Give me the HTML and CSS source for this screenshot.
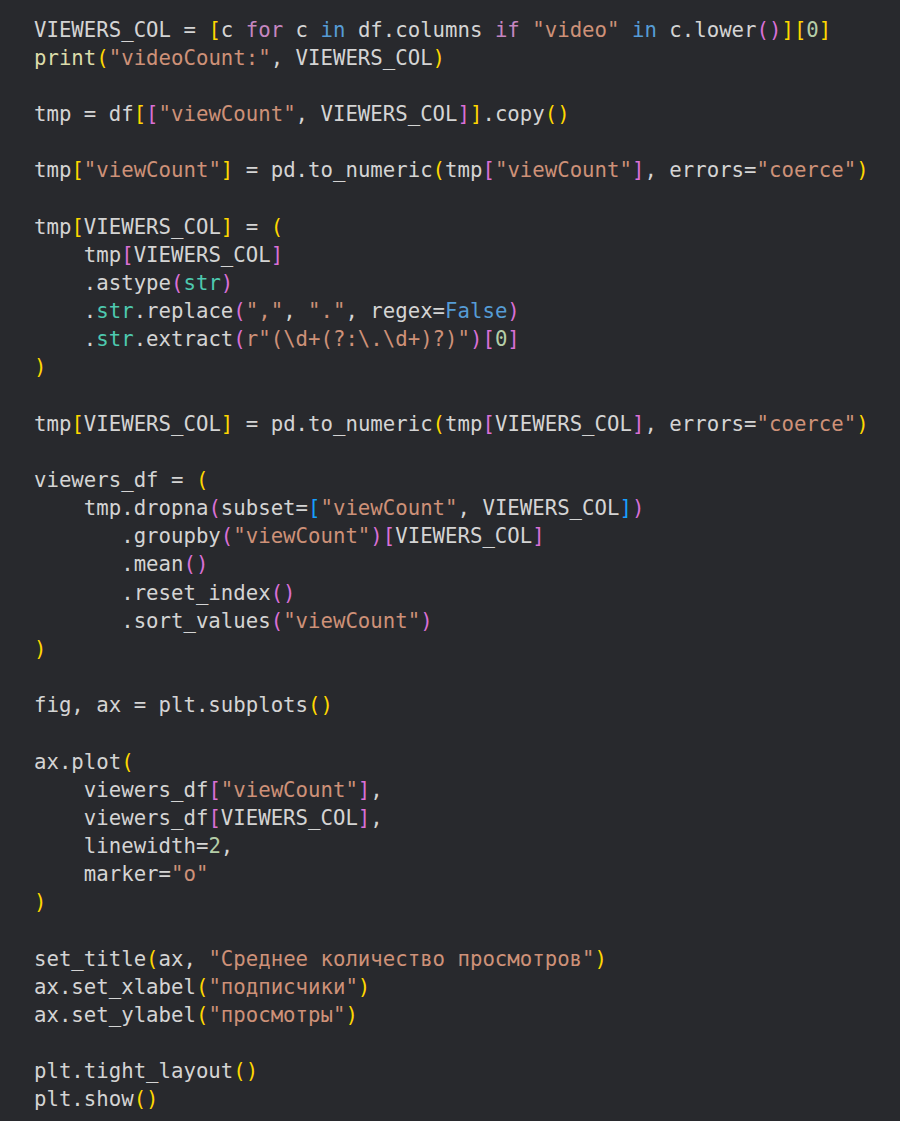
FILE: index.html
```html
<!DOCTYPE html>
<html lang="ru">
<head>
<meta charset="utf-8">
<title>code</title>
<link rel="stylesheet" href="styles.css">
</head>
<body>
<main class="editor">
<pre class="code"><code>VIEWERS_COL = <span class="b1">[</span>c <span class="k">for</span> c <span class="kb">in</span> df.columns <span class="k">if</span> <span class="s">"video"</span> <span class="kb">in</span> c.lower<span class="b2">()</span><span class="b1">][</span><span class="n">0</span><span class="b1">]</span>
<span class="f">print</span><span class="b1">(</span><span class="s">"videoCount:"</span>, VIEWERS_COL<span class="b1">)</span>

tmp = df<span class="b1">[</span><span class="b2">[</span><span class="s">"viewCount"</span>, VIEWERS_COL<span class="b2">]</span><span class="b1">]</span>.copy<span class="b1">()</span>

tmp<span class="b1">[</span><span class="s">"viewCount"</span><span class="b1">]</span> = pd.to_numeric<span class="b1">(</span>tmp<span class="b2">[</span><span class="s">"viewCount"</span><span class="b2">]</span>, errors=<span class="s">"coerce"</span><span class="b1">)</span>

tmp<span class="b1">[</span>VIEWERS_COL<span class="b1">]</span> = <span class="b1">(</span>
    tmp<span class="b2">[</span>VIEWERS_COL<span class="b2">]</span>
    .astype<span class="b2">(</span><span class="t">str</span><span class="b2">)</span>
    .<span class="t">str</span>.replace<span class="b2">(</span><span class="s">","</span>, <span class="s">"."</span>, regex=<span class="kb">False</span><span class="b2">)</span>
    .<span class="t">str</span>.extract<span class="b2">(</span><span class="s">r"(\d+(?:\.\d+)?)"</span><span class="b2">)[</span><span class="n">0</span><span class="b2">]</span>
<span class="b1">)</span>

tmp<span class="b1">[</span>VIEWERS_COL<span class="b1">]</span> = pd.to_numeric<span class="b1">(</span>tmp<span class="b2">[</span>VIEWERS_COL<span class="b2">]</span>, errors=<span class="s">"coerce"</span><span class="b1">)</span>

viewers_df = <span class="b1">(</span>
    tmp.dropna<span class="b2">(</span>subset=<span class="b3">[</span><span class="s">"viewCount"</span>, VIEWERS_COL<span class="b3">]</span><span class="b2">)</span>
       .groupby<span class="b2">(</span><span class="s">"viewCount"</span><span class="b2">)[</span>VIEWERS_COL<span class="b2">]</span>
       .mean<span class="b2">()</span>
       .reset_index<span class="b2">()</span>
       .sort_values<span class="b2">(</span><span class="s">"viewCount"</span><span class="b2">)</span>
<span class="b1">)</span>

fig, ax = plt.subplots<span class="b1">()</span>

ax.plot<span class="b1">(</span>
    viewers_df<span class="b2">[</span><span class="s">"viewCount"</span><span class="b2">]</span>,
    viewers_df<span class="b2">[</span>VIEWERS_COL<span class="b2">]</span>,
    linewidth=<span class="n">2</span>,
    marker=<span class="s">"o"</span>
<span class="b1">)</span>

set_title<span class="b1">(</span>ax, <span class="s">"Среднее количество просмотров"</span><span class="b1">)</span>
ax.set_xlabel<span class="b1">(</span><span class="s">"подписчики"</span><span class="b1">)</span>
ax.set_ylabel<span class="b1">(</span><span class="s">"просмотры"</span><span class="b1">)</span>

plt.tight_layout<span class="b1">()</span>
plt.show<span class="b1">()</span></code></pre>
</main>
</body>
</html>
```

FILE: styles.css
```css
html, body {
  margin: 0;
  padding: 0;
  background: #28292d;
}
.editor {
  width: 900px;
  height: 1121px;
  box-sizing: border-box;
  padding: 15.5px 0 0 34px;
  background: #28292d;
  overflow: hidden;
}
.code {
  margin: 0;
  font-family: "DejaVu Sans Mono", "Liberation Mono", monospace;
  font-size: 20.7px;
  line-height: 28.16px;
  color: #d4d4d4;
  white-space: pre;
}
.code code {
  font-family: inherit;
}
.k { color: #c586c0; }
.kb { color: #569cd6; }
.s { color: #ce9178; }
.f { color: #dcdcaa; }
.n { color: #b5cea8; }
.t { color: #4ec9b0; }
.b1 { color: #ffd700; }
.b2 { color: #da70d6; }
.b3 { color: #179fff; }
```
